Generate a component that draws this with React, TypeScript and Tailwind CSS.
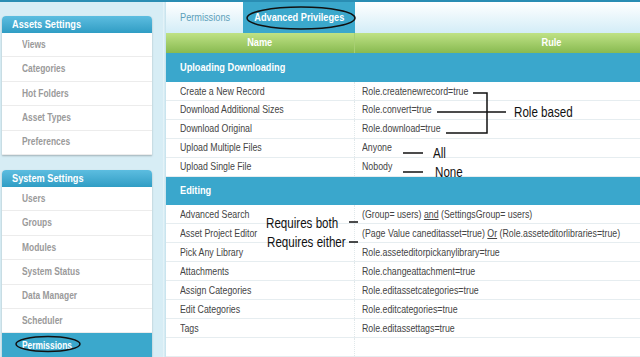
import React from "react";

const assets = ["Views", "Categories", "Hot Folders", "Asset Types", "Preferences"];
const system = ["Users", "Groups", "Modules", "System Status", "Data Manager", "Scheduler"];

type Row = { name: string; rule: React.ReactNode };

const upload: Row[] = [
  { name: "Create a New Record", rule: "Role.createnewrecord=true" },
  { name: "Download Additional Sizes", rule: "Role.convert=true" },
  { name: "Download Original", rule: "Role.download=true" },
  { name: "Upload Multiple Files", rule: "Anyone" },
  { name: "Upload Single File", rule: "Nobody" },
];

const editing: Row[] = [
  {
    name: "Advanced Search",
    rule: (
      <>
        (Group= users) <span className="underline">and</span> (SettingsGroup= users)
      </>
    ),
  },
  {
    name: "Asset Project Editor",
    rule: (
      <>
        (Page Value caneditasset=true) <span className="underline">Or</span> (Role.asseteditorlibraries=true)
      </>
    ),
  },
  { name: "Pick Any Library", rule: "Role.asseteditorpickanylibrary=true" },
  { name: "Attachments", rule: "Role.changeattachment=true" },
  { name: "Assign Categories", rule: "Role.editassetcategories=true" },
  { name: "Edit Categories", rule: "Role.editcategories=true" },
  { name: "Tags", rule: "Role.editassettags=true" },
  { name: "", rule: "" },
];

// Text in the reference is horizontally condensed
function N({ children }: { children: React.ReactNode }) {
  return <span className="inline-block origin-left scale-x-[0.8] whitespace-nowrap">{children}</span>;
}
function NC({ children }: { children: React.ReactNode }) {
  return <span className="inline-block origin-center scale-x-[0.8] whitespace-nowrap">{children}</span>;
}

function Panel({ title, items, selected }: { title: string; items: string[]; selected?: string }) {
  return (
    <div className="w-[150px] rounded-t-[4px] bg-white shadow-[0_1px_2px_rgba(0,0,0,0.25)]">
      <div className="h-[17px] rounded-t-[4px] bg-gradient-to-b from-[#5cbde0] to-[#2f9dc4] pl-[10px] text-[11.5px] font-bold leading-[17px] text-white">
        <N>{title}</N>
      </div>
      {items.map((it) => (
        <div
          key={it}
          className="flex h-[24.4px] items-center border-b border-[#ececec] pl-[20px] text-[10.5px] font-bold text-[#9a9a9a]"
        >
          <N>{it}</N>
        </div>
      ))}
      {selected && (
        <div className="flex h-[25px] items-center bg-[#3ba8cc] pl-[20px] text-[10.5px] font-bold text-white">
          <N>{selected}</N>
        </div>
      )}
    </div>
  );
}

function DataRow({ r }: { r: Row }) {
  return (
    <div className="flex h-[19.7px] items-center border-b border-[#e6edf0] bg-white text-[11px] text-[#444]">
      <div className="flex h-full w-[189px] shrink-0 items-center border-r border-dotted border-[#e0e8ea] pl-[14px]">
        <N>{r.name}</N>
      </div>
      <div className="pl-[7px]">
        <N>{r.rule}</N>
      </div>
    </div>
  );
}

function Section({ title }: { title: string }) {
  return (
    <div className="flex h-[30px] items-center bg-[#3aa7cc] pl-[14px] text-[11.5px] font-bold text-white">
      <N>{title}</N>
    </div>
  );
}

export default function App() {
  return (
    <div
      className="relative h-[357px] w-[640px] overflow-hidden border-t-2 border-[#2a8db3] bg-[#d7edf5]"
      style={{ fontFamily: '"Liberation Sans", Arial, sans-serif' }}
    >
      <div className="flex h-full">
        {/* Sidebar */}
        <div className="flex w-[163px] shrink-0 flex-col gap-[15px] pl-[2px] pt-[14px]">
          <Panel title="Assets Settings" items={assets} />
          <Panel title="System Settings" items={system} selected="Permissions" />
        </div>
        <div className="w-[3px] shrink-0 bg-gradient-to-r from-[#eaf6fa] to-[#c3e1ec]" />
        {/* Main */}
        <div className="flex min-w-0 flex-1 flex-col overflow-hidden bg-white">
          <div className="flex h-[31px] shrink-0 bg-gradient-to-b from-white to-[#d3edf7]">
            <div className="flex w-[77px] shrink-0 items-center pl-[14px] text-[11.5px] text-[#5d9fba]">
              <N>Permissions</N>
            </div>
            <div className="flex w-[112px] shrink-0 items-center justify-center bg-[#3ba8cc] text-[11.5px] font-bold text-white">
              <NC>Advanced Privileges</NC>
            </div>
          </div>
          <div className="flex h-[20px] shrink-0 bg-gradient-to-b from-[#bfe285] to-[#88ba50] text-[11.5px] font-bold text-white">
            <div className="flex w-[189px] shrink-0 items-center justify-center border-r border-[#a7cf72]">
              <NC>Name</NC>
            </div>
            <div className="flex w-[392px] shrink-0 items-center justify-center">
              <NC>Rule</NC>
            </div>
          </div>
          <Section title="Uploading Downloading" />
          {upload.map((r) => (
            <DataRow key={r.name} r={r} />
          ))}
          <Section title="Editing" />
          {editing.map((r, i) => (
            <DataRow key={i} r={r} />
          ))}
        </div>
      </div>

      {/* Annotations */}
      <svg className="pointer-events-none absolute left-0 top-[-2px]" width="640" height="357">
        <ellipse cx="301" cy="18" rx="54" ry="11" fill="none" stroke="#111" strokeWidth="1.5" />
        <ellipse cx="48" cy="344" rx="32" ry="7.5" fill="none" stroke="#111" strokeWidth="1.5" />
        <g stroke="#111" strokeWidth="1.5" fill="none">
          <polyline points="473,93 487,93 487,133 446,133" />
          <line x1="437" y1="112" x2="506" y2="112" />
          <line x1="403" y1="153" x2="423" y2="153" />
          <line x1="403" y1="172" x2="423" y2="172" />
          <line x1="349" y1="222" x2="358" y2="222" />
          <line x1="349" y1="242" x2="358" y2="242" />
        </g>
      </svg>
      <div className="pointer-events-none absolute left-[514px] top-[102px] text-[14.5px] leading-[16px] text-[#111]">
        <N>Role based</N>
      </div>
      <div className="pointer-events-none absolute left-[433px] top-[143px] text-[14.5px] leading-[16px] text-[#111]">
        <N>All</N>
      </div>
      <div className="pointer-events-none absolute left-[435px] top-[162px] text-[14.5px] leading-[16px] text-[#111]">
        <N>None</N>
      </div>
      <div className="pointer-events-none absolute left-[266px] top-[213px] text-[14.5px] leading-[16px] text-[#111]">
        <N>Requires both</N>
      </div>
      <div className="pointer-events-none absolute left-[267px] top-[232px] text-[14.5px] leading-[16px] text-[#111]">
        <N>Requires either</N>
      </div>
    </div>
  );
}
